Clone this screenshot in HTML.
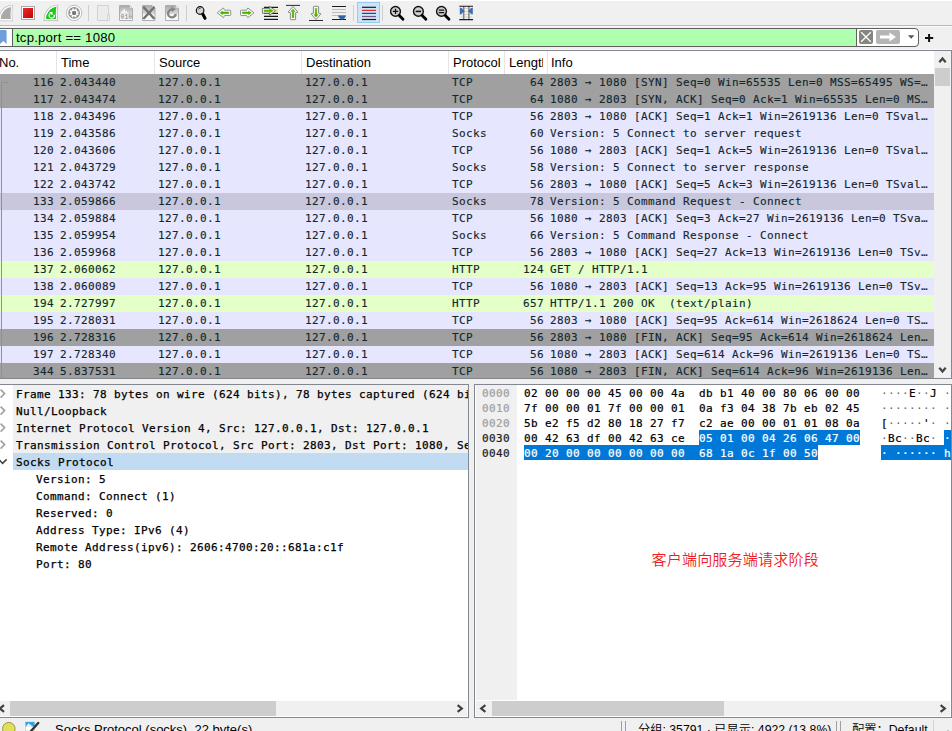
<!DOCTYPE html>
<html><head><meta charset="utf-8"><title>Wireshark</title>
<style>
html,body{margin:0;padding:0}
body{width:952px;height:731px;overflow:hidden;background:#f0f0f0;position:relative;font-family:"Liberation Sans","Noto Sans CJK SC",sans-serif;font-size:12px;color:#000}
.abs{position:absolute}
.mono{font-family:"DejaVu Sans Mono","Liberation Mono",monospace;font-size:11px;letter-spacing:0.378px;white-space:pre;-webkit-text-stroke:0.13px}
#plist{position:absolute;left:0;top:51px;width:934px;height:327px;overflow:hidden;background:#fff}
.hd{position:absolute;top:0;height:23px;line-height:23px;font-size:13px;color:#000;white-space:nowrap;overflow:hidden}
.sep{position:absolute;top:0;width:1px;height:23px;background:#e5e5e5}
.r{position:absolute;left:0;width:934px;height:17px;line-height:17px;color:#12272e}
.r span{position:absolute;top:0}
.g{background:#a0a0a0}.t{background:#e7e6ff}.h{background:#e4ffc7}.s{background:#c8c7dc}
.d{-webkit-text-stroke:0.25px;position:absolute;height:17px;line-height:19px;left:13px;width:455px;color:#000;overflow:hidden}
.d span{position:absolute;top:0}
.b{-webkit-text-stroke:0.22px;position:absolute;height:15px;line-height:17px;overflow:hidden;color:#000}
</style></head><body>

<div class="abs" style="left:0;top:0;width:952px;height:1px;background:#fff"></div>
<svg class="abs" style="left:0;top:0" width="952" height="28" viewBox="0 0 952 28">
<defs>
<linearGradient id="gr" x1="0" y1="0" x2="1" y2="1"><stop offset="0" stop-color="#e63030"/><stop offset="1" stop-color="#c80000"/></linearGradient>
<linearGradient id="gd" x1="0" y1="0" x2="0" y2="1"><stop offset="0" stop-color="#a9a9a9"/><stop offset="0.55" stop-color="#d8d8d8"/><stop offset="0.6" stop-color="#f4f4f4"/><stop offset="1" stop-color="#fbfbfb"/></linearGradient>
<linearGradient id="gg" x1="0" y1="0" x2="0" y2="1"><stop offset="0" stop-color="#73d216"/><stop offset="1" stop-color="#4e9a06"/></linearGradient>
</defs>
<rect x="0" y="25" width="952" height="1" fill="#b9b9b9"/>
<rect x="0" y="26" width="952" height="1" fill="#fafafa"/>
<!-- gray fin -->
<g transform="translate(-45.2 0.2)"><path d="M56.6 6.4 C50.4 6.6 45.4 12.3 45.2 19.5 L56.5 19.5 C55.9 15 55.9 10.5 56.6 6.4Z" fill="none" stroke="#c4c4c4" stroke-width="3" stroke-linejoin="miter"/>
<path d="M56.6 6.4 C50.4 6.6 45.4 12.3 45.2 19.5 L56.5 19.5 C55.9 15 55.9 10.5 56.6 6.4Z" fill="#a9a9a9" stroke="#fafafa" stroke-width="1.6"/>
<path d="M56.4 7 C51 7.4 46.6 12.6 46 18.9 L56 18.9 C55.5 15 55.6 11 56.4 7Z" fill="#a9a9a9"/></g>
<!-- stop -->
<rect x="21.5" y="6.5" width="13" height="13" fill="#fff" stroke="#a9a9a9"/>
<rect x="23" y="8" width="10" height="10" fill="url(#gr)"/>
<!-- restart fin -->
<path d="M56.6 6.4 C50.4 6.6 45.4 12.3 45.2 19.5 L56.5 19.5 C55.9 15 55.9 10.5 56.6 6.4Z" fill="none" stroke="#b4b4b4" stroke-width="3" stroke-linejoin="miter"/>
<path d="M56.6 6.4 C50.4 6.6 45.4 12.3 45.2 19.5 L56.5 19.5 C55.9 15 55.9 10.5 56.6 6.4Z" fill="#1fc71f" stroke="#fafafa" stroke-width="1.6"/>
<path d="M56.4 7 C51 7.4 46.6 12.6 46 18.9 L56 18.9 C55.5 15 55.6 11 56.4 7Z" fill="#1cc81c"/>
<path d="M54.2 14.6 A2.6 2.6 0 1 1 50 13.6" fill="none" stroke="#fff" stroke-width="1.2"/>
<path d="M49.2 12 L52.6 12 L52.4 15.2 L51 14.2Z" fill="#fff"/>
<!-- gear -->
<circle cx="74.1" cy="12.9" r="7.7" fill="#fdfdfd" stroke="#b0b0b0" stroke-width="0.8"/>
<circle cx="74.1" cy="12.9" r="5.9" fill="#909090"/>
<circle cx="74.1" cy="12.9" r="3.9" fill="none" stroke="#fff" stroke-width="1.5" stroke-dasharray="1.53 1.53" transform="rotate(11 74.1 12.9)"/>
<circle cx="74.1" cy="12.9" r="3.4" fill="#fff"/>
<rect x="72.1" y="10.9" width="4" height="4" rx="1.2" fill="#777"/>
<!-- sep -->
<rect x="88" y="5" width="1" height="16" fill="#cfcfcf"/>
<!-- disabled file -->
<path d="M97.5 5.5 H108.5 V20.5 H97.5Z" fill="#ececec" stroke="#d2d2d2"/>
<path d="M107.5 14.5 H109.5 V20.5 H107.5Z" fill="#f0f0f0" stroke="#d2d2d2"/>
<!-- save 010 -->
<path d="M119.5 5.5 H129.5 L132.5 8.5 V20.5 H119.5Z" fill="url(#gd)" stroke="#adadad"/>
<path d="M129.5 5.5 V8.5 H132.5Z" fill="#fff" stroke="#adadad" stroke-width="0.7"/>
<path d="M120.4 13.4 L124.4 8.2 L125.4 11.4 L126.6 10.4 L128 13.4Z" fill="#f2f2f2"/>
<text x="120.6" y="18.8" font-family="'Liberation Mono',monospace" font-size="6.6" font-weight="bold" fill="#9a9a9a" textLength="11.4" lengthAdjust="spacingAndGlyphs">010</text>
<!-- close -->
<path d="M142.5 5.5 H152 L155 8.5 V20.5 H142.5Z" fill="url(#gd)" stroke="#adadad"/>
<path d="M152 5.5 V8.5 H155Z" fill="#fff" stroke="#adadad" stroke-width="0.7"/>
<path d="M144 7.6 L153.8 18.2 M153.8 7.6 L144 18.2" stroke="#727272" stroke-width="2.4" fill="none" stroke-linecap="round"/>
<!-- reload -->
<path d="M165.5 5.5 H175.5 L178.5 8.5 V20.5 H165.5Z" fill="url(#gd)" stroke="#adadad"/>
<path d="M175.5 5.5 V8.5 H178.5Z" fill="#fff" stroke="#adadad" stroke-width="0.7"/>
<path d="M175.8 14 A3.9 3.9 0 1 1 172.4 9.6" fill="none" stroke="#858585" stroke-width="2.4"/>
<path d="M171.2 6.6 L175.8 9 L172 12Z" fill="#858585"/>
<!-- sep -->
<rect x="186" y="5" width="1" height="16" fill="#cfcfcf"/>
<!-- find -->
<circle cx="200.1" cy="10.5" r="3.8" fill="#d2d2d2" stroke="#111" stroke-width="1.2"/>
<path d="M198.2 9.6 A2.3 2.3 0 0 1 200.6 8.2" stroke="#222" stroke-width="0.8" fill="none"/>
<path d="M202.9 14.2 L205 18.3" stroke="#000" stroke-width="3" stroke-linecap="round"/>
<!-- back -->
<path d="M217.2 12.8 L223.4 8 L224.6 10.2 L230 10.2 Q230.7 10.2 230.7 11 L230.7 14.8 Q230.7 15.5 230 15.5 L224.6 15.5 L223.4 17.6Z" fill="#fff" stroke="#858585" stroke-width="0.9" stroke-linejoin="round"/>
<path d="M220 12.8 L222.6 11 L222.6 11.9 L228.8 11.9 L228.8 13.7 L222.6 13.7 L222.6 14.7Z" fill="#4db300" stroke="#4db300" stroke-width="0.5" stroke-linejoin="round"/>
<!-- fwd -->
<path d="M254 12.8 L247.8 8 L246.6 10.2 L241.2 10.2 Q240.5 10.2 240.5 11 L240.5 14.8 Q240.5 15.5 241.2 15.5 L246.6 15.5 L247.8 17.6Z" fill="#fff" stroke="#858585" stroke-width="0.9" stroke-linejoin="round"/>
<path d="M251.2 12.8 L248.6 11 L248.6 11.9 L242.4 11.9 L242.4 13.7 L248.6 13.7 L248.6 14.7Z" fill="#4db300" stroke="#4db300" stroke-width="0.5" stroke-linejoin="round"/>
<!-- goto -->
<g stroke="#1a1a1a" stroke-width="1.1"><path d="M264 7.4 H278 M264 10.4 H278 M264 13.4 H278 M264 16.4 H278 M264 19.4 H278"/></g>
<rect x="274.5" y="9" width="3.5" height="3.4" fill="#fce94f"/>
<path d="M275.6 10.8 L269.6 6.4 L269.6 8.4 L262.4 8.4 L262.4 13.2 L269.6 13.2 L269.6 15.2Z" fill="#fff" stroke="#606060" stroke-width="0.8" stroke-linejoin="round"/>
<path d="M273.3 10.8 L269.6 8.4 L269.6 9.9 L264 9.9 L264 11.7 L269.6 11.7 L269.6 13.2Z" fill="#5fb800" stroke="#5fb800" stroke-width="0.5"/>
<!-- top -->
<path d="M286 5.4 H300" stroke="#2a2a2a" stroke-width="1"/>
<path d="M293 6.4 L297.9 12.2 L295.6 12.8 L295.6 19 Q295.6 19.7 294.9 19.7 L291.1 19.7 Q290.4 19.7 290.4 19 L290.4 12.8 L288.1 12.2Z" fill="#fff" stroke="#7d7d7d" stroke-width="0.9" stroke-linejoin="round"/>
<path d="M293 8.8 L295.2 11.6 L293.9 11.6 L293.9 17.8 L292.1 17.8 L292.1 11.6 L290.8 11.6Z" fill="url(#gg)" stroke="#55a80a" stroke-width="0.4" stroke-linejoin="round"/>
<!-- bottom -->
<path d="M309 20.5 H323" stroke="#2a2a2a" stroke-width="1"/>
<path d="M316 19.6 L320.9 13.8 L318.6 13.2 L318.6 7 Q318.6 6.3 317.9 6.3 L314.1 6.3 Q313.4 6.3 313.4 7 L313.4 13.2 L311.1 13.8Z" fill="#fff" stroke="#7d7d7d" stroke-width="0.9" stroke-linejoin="round"/>
<path d="M316 17.2 L318.2 14.4 L316.9 14.4 L316.9 8.2 L315.1 8.2 L315.1 14.4 L313.8 14.4Z" fill="url(#gg)" stroke="#55a80a" stroke-width="0.4" stroke-linejoin="round"/>
<!-- autoscroll -->
<path d="M332 6.5 H346 M332 19.5 H346" stroke="#1a1a1a" stroke-width="1.1"/>
<path d="M332 9.5 H346 M332 12.5 H346 M332 15.5 H346" stroke="#b5b8ae" stroke-width="0.9"/>
<path d="M338 15.4 H346 C345.6 17.6 344 19.4 342 19.8 C340 19.4 338.4 17.6 338 15.4Z" fill="#3465a4"/>
<!-- sep -->
<rect x="353" y="5" width="1" height="16" fill="#cfcfcf"/>
<!-- colorize -->
<rect x="357.5" y="2.5" width="22" height="20" fill="#cce4f7" stroke="#99c9ef"/>
<path d="M362 7.3 H376" stroke="#1a1a1a" stroke-width="1.2"/>
<path d="M362 10.4 H376" stroke="#ef2929" stroke-width="1.2"/>
<path d="M362 13.4 H376" stroke="#204a87" stroke-width="1.2"/>
<path d="M362 16.5 H376" stroke="#75507b" stroke-width="1.2"/>
<path d="M362 19.5 H376" stroke="#1a1a1a" stroke-width="1.2"/>
<!-- sep -->
<rect x="382" y="5" width="1" height="16" fill="#cfcfcf"/>
<!-- zoom in -->
<g id="zm"><circle cx="395.5" cy="11.4" r="4.9" fill="#cdcdcd" stroke="#111" stroke-width="1.4"/><path d="M399.3 15.4 L403 19.2" stroke="#000" stroke-width="2.8" stroke-linecap="round"/></g>
<path d="M392.8 11.4 H398.2 M395.5 8.7 V14.1" stroke="#111" stroke-width="1.3"/>
<!-- zoom out -->
<circle cx="418.4" cy="11.4" r="4.9" fill="#cdcdcd" stroke="#111" stroke-width="1.4"/><path d="M422.2 15.4 L425.9 19.2" stroke="#000" stroke-width="2.8" stroke-linecap="round"/>
<path d="M415.7 11.4 H421.1" stroke="#111" stroke-width="1.5"/>
<!-- zoom reset -->
<circle cx="441.5" cy="11.4" r="4.9" fill="#cdcdcd" stroke="#111" stroke-width="1.4"/><path d="M445.3 15.4 L449 19.2" stroke="#000" stroke-width="2.8" stroke-linecap="round"/>
<path d="M438.8 10.2 H444.2 M438.8 12.7 H444.2" stroke="#111" stroke-width="1.3"/>
<!-- resize cols -->
<path d="M460.8 8.5 H472 M460.8 11.5 H472 M460.8 14.5 H472 M460.8 17 H472" stroke="#d0d2ca" stroke-width="0.9"/>
<path d="M463.7 6 V20 M468.9 6 V20" stroke="#85877f" stroke-width="1.5"/>
<path d="M459.3 6.3 H473 M459.3 19.6 H473" stroke="#1a1a1a" stroke-width="1.1"/>
<path d="M459.8 7.6 Q461 7.6 464.6 11 Q461 14.6 459.8 14.6Z M472.8 7.6 Q471.6 7.6 468 11 Q471.6 14.6 472.8 14.6Z" fill="#3a6db5"/>
</svg>

<div class="abs" style="left:-4px;top:28px;width:923px;height:19px;background:#fff;border:1px solid #5f5f5f;box-sizing:border-box;border-radius:0 4px 4px 0"></div>
<div class="abs" style="left:12px;top:29px;width:1px;height:17px;background:#5f5f5f"></div>
<div class="abs" style="left:13px;top:29px;width:843px;height:17px;background:#afffaf"></div>
<div class="abs" style="left:856px;top:29px;width:1px;height:17px;background:#5f5f5f"></div>
<div class="abs" style="left:16px;top:29px;height:17px;line-height:17px;font-size:13.2px;letter-spacing:0.2px;white-space:pre">tcp.port == 1080</div>
<svg class="abs" style="left:0;top:28px" width="952" height="22" viewBox="0 28 952 22">
<path d="M0 30 H5.6 Q6.6 30 6.6 31 V44 L3.3 41 L0 44Z" fill="#6f9fd8"/>
<rect x="859" y="30" width="14" height="14" rx="2" fill="#86867e"/>
<path d="M861.2 32.2 L870.8 41.8 M870.8 32.2 L861.2 41.8" stroke="#fff" stroke-width="1.3"/>
<rect x="876" y="30" width="24" height="14" rx="2" fill="#b5b5b5"/>
<path d="M880 35.6 H889.4 V32.6 L896 37 L889.4 41.4 V38.4 H880Z" fill="#fff"/>
<path d="M908 35.2 H914.4 L911.2 38.8Z" fill="#555"/>
<path d="M925 38 H933.2 M929.1 33.9 V42.1" stroke="#111" stroke-width="2"/>
<rect x="0" y="49" width="952" height="1" fill="#f8f8f8"/>
</svg>
<div class="abs" style="left:0;top:50px;width:952px;height:1px;background:#828790"></div>
<div class="abs" style="left:951px;top:50px;width:1px;height:329px;background:#828790"></div>
<div class="abs" style="left:0;top:378px;width:952px;height:1px;background:#828790"></div>
<div id="plist">
<div class="hd" style="left:-1px;width:56px">No.</div>
<div class="hd" style="left:61px;width:93px">Time</div>
<div class="hd" style="left:159px;width:142px">Source</div>
<div class="hd" style="left:306px;width:141px">Destination</div>
<div class="hd" style="left:453px;width:51px">Protocol</div>
<div class="hd" style="left:509px;width:34px">Length</div>
<div class="hd" style="left:551px;width:300px">Info</div>
<div class="sep" style="left:56px"></div>
<div class="sep" style="left:154px"></div>
<div class="sep" style="left:301px"></div>
<div class="sep" style="left:448px"></div>
<div class="sep" style="left:504px"></div>
<div class="sep" style="left:547px"></div>
<div class="r mono g" style="top:23px"><span style="right:880px">116</span><span style="left:60px">2.043440</span><span style="left:158px">127.0.0.1</span><span style="left:305px">127.0.0.1</span><span style="left:452px">TCP</span><span style="right:390px">64</span><span style="left:550px">2803 → 1080 [SYN] Seq=0 Win=65535 Len=0 MSS=65495 WS=…</span></div>
<div class="r mono g" style="top:40px"><span style="right:880px">117</span><span style="left:60px">2.043474</span><span style="left:158px">127.0.0.1</span><span style="left:305px">127.0.0.1</span><span style="left:452px">TCP</span><span style="right:390px">64</span><span style="left:550px">1080 → 2803 [SYN, ACK] Seq=0 Ack=1 Win=65535 Len=0 MS…</span></div>
<div class="r mono t" style="top:57px"><span style="right:880px">118</span><span style="left:60px">2.043496</span><span style="left:158px">127.0.0.1</span><span style="left:305px">127.0.0.1</span><span style="left:452px">TCP</span><span style="right:390px">56</span><span style="left:550px">2803 → 1080 [ACK] Seq=1 Ack=1 Win=2619136 Len=0 TSval…</span></div>
<div class="r mono t" style="top:74px"><span style="right:880px">119</span><span style="left:60px">2.043586</span><span style="left:158px">127.0.0.1</span><span style="left:305px">127.0.0.1</span><span style="left:452px">Socks</span><span style="right:390px">60</span><span style="left:550px">Version: 5 Connect to server request</span></div>
<div class="r mono t" style="top:91px"><span style="right:880px">120</span><span style="left:60px">2.043606</span><span style="left:158px">127.0.0.1</span><span style="left:305px">127.0.0.1</span><span style="left:452px">TCP</span><span style="right:390px">56</span><span style="left:550px">1080 → 2803 [ACK] Seq=1 Ack=5 Win=2619136 Len=0 TSval…</span></div>
<div class="r mono t" style="top:108px"><span style="right:880px">121</span><span style="left:60px">2.043729</span><span style="left:158px">127.0.0.1</span><span style="left:305px">127.0.0.1</span><span style="left:452px">Socks</span><span style="right:390px">58</span><span style="left:550px">Version: 5 Connect to server response</span></div>
<div class="r mono t" style="top:125px"><span style="right:880px">122</span><span style="left:60px">2.043742</span><span style="left:158px">127.0.0.1</span><span style="left:305px">127.0.0.1</span><span style="left:452px">TCP</span><span style="right:390px">56</span><span style="left:550px">2803 → 1080 [ACK] Seq=5 Ack=3 Win=2619136 Len=0 TSval…</span></div>
<div class="r mono s" style="top:142px"><span style="right:880px">133</span><span style="left:60px">2.059866</span><span style="left:158px">127.0.0.1</span><span style="left:305px">127.0.0.1</span><span style="left:452px">Socks</span><span style="right:390px">78</span><span style="left:550px">Version: 5 Command Request - Connect</span></div>
<div class="r mono t" style="top:159px"><span style="right:880px">134</span><span style="left:60px">2.059884</span><span style="left:158px">127.0.0.1</span><span style="left:305px">127.0.0.1</span><span style="left:452px">TCP</span><span style="right:390px">56</span><span style="left:550px">1080 → 2803 [ACK] Seq=3 Ack=27 Win=2619136 Len=0 TSva…</span></div>
<div class="r mono t" style="top:176px"><span style="right:880px">135</span><span style="left:60px">2.059954</span><span style="left:158px">127.0.0.1</span><span style="left:305px">127.0.0.1</span><span style="left:452px">Socks</span><span style="right:390px">66</span><span style="left:550px">Version: 5 Command Response - Connect</span></div>
<div class="r mono t" style="top:193px"><span style="right:880px">136</span><span style="left:60px">2.059968</span><span style="left:158px">127.0.0.1</span><span style="left:305px">127.0.0.1</span><span style="left:452px">TCP</span><span style="right:390px">56</span><span style="left:550px">2803 → 1080 [ACK] Seq=27 Ack=13 Win=2619136 Len=0 TSv…</span></div>
<div class="r mono h" style="top:210px"><span style="right:880px">137</span><span style="left:60px">2.060062</span><span style="left:158px">127.0.0.1</span><span style="left:305px">127.0.0.1</span><span style="left:452px">HTTP</span><span style="right:390px">124</span><span style="left:550px">GET / HTTP/1.1</span></div>
<div class="r mono t" style="top:227px"><span style="right:880px">138</span><span style="left:60px">2.060089</span><span style="left:158px">127.0.0.1</span><span style="left:305px">127.0.0.1</span><span style="left:452px">TCP</span><span style="right:390px">56</span><span style="left:550px">1080 → 2803 [ACK] Seq=13 Ack=95 Win=2619136 Len=0 TSv…</span></div>
<div class="r mono h" style="top:244px"><span style="right:880px">194</span><span style="left:60px">2.727997</span><span style="left:158px">127.0.0.1</span><span style="left:305px">127.0.0.1</span><span style="left:452px">HTTP</span><span style="right:390px">657</span><span style="left:550px">HTTP/1.1 200 OK  (text/plain)</span></div>
<div class="r mono t" style="top:261px"><span style="right:880px">195</span><span style="left:60px">2.728031</span><span style="left:158px">127.0.0.1</span><span style="left:305px">127.0.0.1</span><span style="left:452px">TCP</span><span style="right:390px">56</span><span style="left:550px">2803 → 1080 [ACK] Seq=95 Ack=614 Win=2618624 Len=0 TS…</span></div>
<div class="r mono g" style="top:278px"><span style="right:880px">196</span><span style="left:60px">2.728316</span><span style="left:158px">127.0.0.1</span><span style="left:305px">127.0.0.1</span><span style="left:452px">TCP</span><span style="right:390px">56</span><span style="left:550px">2803 → 1080 [FIN, ACK] Seq=95 Ack=614 Win=2618624 Len…</span></div>
<div class="r mono t" style="top:295px"><span style="right:880px">197</span><span style="left:60px">2.728340</span><span style="left:158px">127.0.0.1</span><span style="left:305px">127.0.0.1</span><span style="left:452px">TCP</span><span style="right:390px">56</span><span style="left:550px">1080 → 2803 [ACK] Seq=614 Ack=96 Win=2619136 Len=0 TS…</span></div>
<div class="r mono g" style="top:312px"><span style="right:880px">344</span><span style="left:60px">5.837531</span><span style="left:158px">127.0.0.1</span><span style="left:305px">127.0.0.1</span><span style="left:452px">TCP</span><span style="right:390px">56</span><span style="left:550px">1080 → 2803 [FIN, ACK] Seq=614 Ack=96 Win=2619136 Len…</span></div>
<div class="abs" style="left:1px;top:31px;width:1px;height:296px;background:#88939a"></div>
<div class="abs" style="left:1px;top:31px;width:8px;height:1px;background:#88939a"></div>
</div>
<div class="abs" style="left:934px;top:51px;width:17px;height:327px;background:#f0f0f0"></div>
<div class="abs" style="left:935px;top:68px;width:15px;height:18px;background:#cdcdcd"></div>
<svg class="abs" style="left:934px;top:51px" width="17" height="327" viewBox="0 0 17 327"><path d="M5.3 11.2 L8.5 7.6 L11.7 11.2" fill="none" stroke="#454545" stroke-width="2.3"/><path d="M5.3 316.8 L8.5 320.4 L11.7 316.8" fill="none" stroke="#454545" stroke-width="2.3"/></svg>
<div class="abs" style="left:0;top:384px;width:469px;height:334px;background:#fff;border:1px solid #828790;border-left:none;box-sizing:border-box"></div>
<div class="d mono" style="top:385px;background:#f0f0f0"><span style="left:3px">Frame 133: 78 bytes on wire (624 bits), 78 bytes captured (624 bits)</span></div>
<div class="d mono" style="top:402px;background:#f0f0f0"><span style="left:3px">Null/Loopback</span></div>
<div class="d mono" style="top:419px;background:#f0f0f0"><span style="left:3px">Internet Protocol Version 4, Src: 127.0.0.1, Dst: 127.0.0.1</span></div>
<div class="d mono" style="top:436px;background:#f0f0f0"><span style="left:3px">Transmission Control Protocol, Src Port: 2803, Dst Port: 1080, Seq: 3, Ack: 3, Len: 22</span></div>
<div class="d mono" style="top:453px;background:#c0dbf2"><span style="left:3px">Socks Protocol</span></div>
<div class="d mono" style="top:470px;background:#fff"><span style="left:23px">Version: 5</span></div>
<div class="d mono" style="top:487px;background:#fff"><span style="left:23px">Command: Connect (1)</span></div>
<div class="d mono" style="top:504px;background:#fff"><span style="left:23px">Reserved: 0</span></div>
<div class="d mono" style="top:521px;background:#fff"><span style="left:23px">Address Type: IPv6 (4)</span></div>
<div class="d mono" style="top:538px;background:#fff"><span style="left:23px">Remote Address(ipv6): 2606:4700:20::681a:c1f</span></div>
<div class="d mono" style="top:555px;background:#fff"><span style="left:23px">Port: 80</span></div>
<svg class="abs" style="left:0;top:385px" width="13" height="90" viewBox="0 0 13 90">
<g fill="none" stroke="#a0a0a0" stroke-width="1.6"><path d="M0.6 4.6 L4.6 8.6 L0.6 12.6"/><path d="M0.6 21.6 L4.6 25.6 L0.6 29.6"/><path d="M0.6 38.6 L4.6 42.6 L0.6 46.6"/><path d="M0.6 55.6 L4.6 59.6 L0.6 63.6"/></g>
<path d="M-1.2 74.4 L2.6 78.4 L6.6 74.4" fill="none" stroke="#404040" stroke-width="1.5"/></svg>
<div class="abs" style="left:0;top:701px;width:467px;height:15px;background:#f0f0f0"></div>
<div class="abs" style="left:10px;top:701px;width:266px;height:15px;background:#cdcdcd"></div>
<svg class="abs" style="left:0;top:700px" width="468" height="17" viewBox="0 700 468 17"><path d="M4 705.2 L0 708.5 L4 711.8" fill="none" stroke="#404040" stroke-width="2.2"/><path d="M457.6 705.2 L461.8 708.5 L457.6 711.8" fill="none" stroke="#404040" stroke-width="2.2"/></svg>
<div class="abs" style="left:474px;top:384px;width:478px;height:334px;background:#fff;border:1px solid #828790;box-sizing:border-box;overflow:hidden"></div>
<div class="abs" id="bp" style="left:475px;top:385px;width:476px;height:315px;overflow:hidden">
<div class="abs" style="left:1px;top:0;width:41px;height:315px;background:#f0f0f0"></div>
<div class="b mono" style="left:7px;top:0px;color:#a0a0a0">0000</div>
<div class="b mono" style="left:49px;top:0px">02 00 00 00 45 00 00 4a  db b1 40 00 80 06 00 00</div>
<div class="b mono" style="left:406px;top:0px"><span style="color:#666;-webkit-text-stroke:0">····</span>E<span style="color:#666;-webkit-text-stroke:0">··</span>J <span style="color:#666;-webkit-text-stroke:0">··</span>@<span style="color:#666;-webkit-text-stroke:0">·····</span></div>
<div class="b mono" style="left:7px;top:15px;color:#a0a0a0">0010</div>
<div class="b mono" style="left:49px;top:15px">7f 00 00 01 7f 00 00 01  0a f3 04 38 7b eb 02 45</div>
<div class="b mono" style="left:406px;top:15px"><span style="color:#666;-webkit-text-stroke:0">········</span> <span style="color:#666;-webkit-text-stroke:0">···</span>8{<span style="color:#666;-webkit-text-stroke:0">··</span>E</div>
<div class="b mono" style="left:7px;top:30px;color:#a0a0a0">0020</div>
<div class="b mono" style="left:49px;top:30px">5b e2 f5 d2 80 18 27 f7  c2 ae 00 00 01 01 08 0a</div>
<div class="b mono" style="left:406px;top:30px">[<span style="color:#666;-webkit-text-stroke:0">·····</span>'<span style="color:#666;-webkit-text-stroke:0">·</span> <span style="color:#666;-webkit-text-stroke:0">········</span></div>
<div class="b mono" style="left:7px;top:45px;color:#1e1e1e">0030</div>
<div class="b mono" style="left:49px;top:45px">00 42 63 df 00 42 63 ce</div>
<div class="b mono" style="left:224px;top:45px;background:#0078d7;color:#fff">05 01 00 04 26 06 47 00</div>
<div class="b mono" style="left:406px;top:45px"><span style="color:#666;-webkit-text-stroke:0">·</span>Bc<span style="color:#666;-webkit-text-stroke:0">··</span>Bc<span style="color:#666;-webkit-text-stroke:0">·</span> </div>
<div class="b mono" style="left:469px;top:45px;background:#0078d7;color:#fff">····&·G·</div>
<div class="b mono" style="left:7px;top:60px;color:#1e1e1e">0040</div>
<div class="b mono" style="left:49px;top:60px;background:#0078d7;color:#fff">00 20 00 00 00 00 00 00  68 1a 0c 1f 00 50</div>
<div class="b mono" style="left:406px;top:60px;background:#0078d7;color:#fff">· ······ h····P</div>
</div>
<div class="abs" style="left:651.5px;top:547px;font-size:15.1px;letter-spacing:0.12px;font-weight:350;color:#ee1c25;white-space:nowrap;font-family:'Liberation Sans','Noto Sans CJK SC',sans-serif">客户端向服务端请求阶段</div>
<div class="abs" style="left:476px;top:701px;width:474px;height:15px;background:#f0f0f0"></div>
<div class="abs" style="left:492px;top:701px;width:232px;height:15px;background:#cdcdcd"></div>
<svg class="abs" style="left:475px;top:700px" width="476" height="17" viewBox="475 700 476 17"><path d="M485.4 705.2 L481.2 708.5 L485.4 711.8" fill="none" stroke="#404040" stroke-width="2.2"/><path d="M940.6 705.2 L944.8 708.5 L940.6 711.8" fill="none" stroke="#404040" stroke-width="2.2"/></svg>
<svg class="abs" style="left:0;top:718px" width="952" height="13" viewBox="0 718 952 13">
<circle cx="8.8" cy="728.7" r="6.3" fill="#dfdf5c" stroke="#8e8e34" stroke-width="0.9"/>
<rect x="25.5" y="722" width="9" height="9" fill="#fff" stroke="#c8c8c8" stroke-width="0.6"/>
<rect x="25.5" y="722" width="9" height="4.4" fill="#2fa3e2"/>
<path d="M26 726.4 L28.8 723 L29.8 725 L30.6 724.4 L32 726.4Z" fill="#fff"/>
<path d="M38.2 723 L30.6 731.5" stroke="#333" stroke-width="2.4" stroke-linecap="round"/>
<path d="M621.5 721 V731 M625.5 721 V731 M836.5 721 V731 M840.5 721 V731" stroke="#a0a0a0" stroke-width="1"/>
<path d="M933.5 720 V731" stroke="#d2d2d2" stroke-width="1"/><rect x="947" y="730" width="2" height="1" fill="#bfbfbf"/>
</svg>
<div class="abs" style="left:55px;top:722px;font-size:13px;white-space:nowrap">Socks Protocol (socks), 22 byte(s)</div>
<div class="abs" style="left:638px;top:720px;font-size:12.25px;font-weight:350;white-space:nowrap">分组: 35791 · 已显示: 4922 (13.8%)</div>
<div class="abs" style="left:852px;top:720px;font-size:12.25px;font-weight:350;white-space:nowrap">配置：Default</div>
</body></html>
